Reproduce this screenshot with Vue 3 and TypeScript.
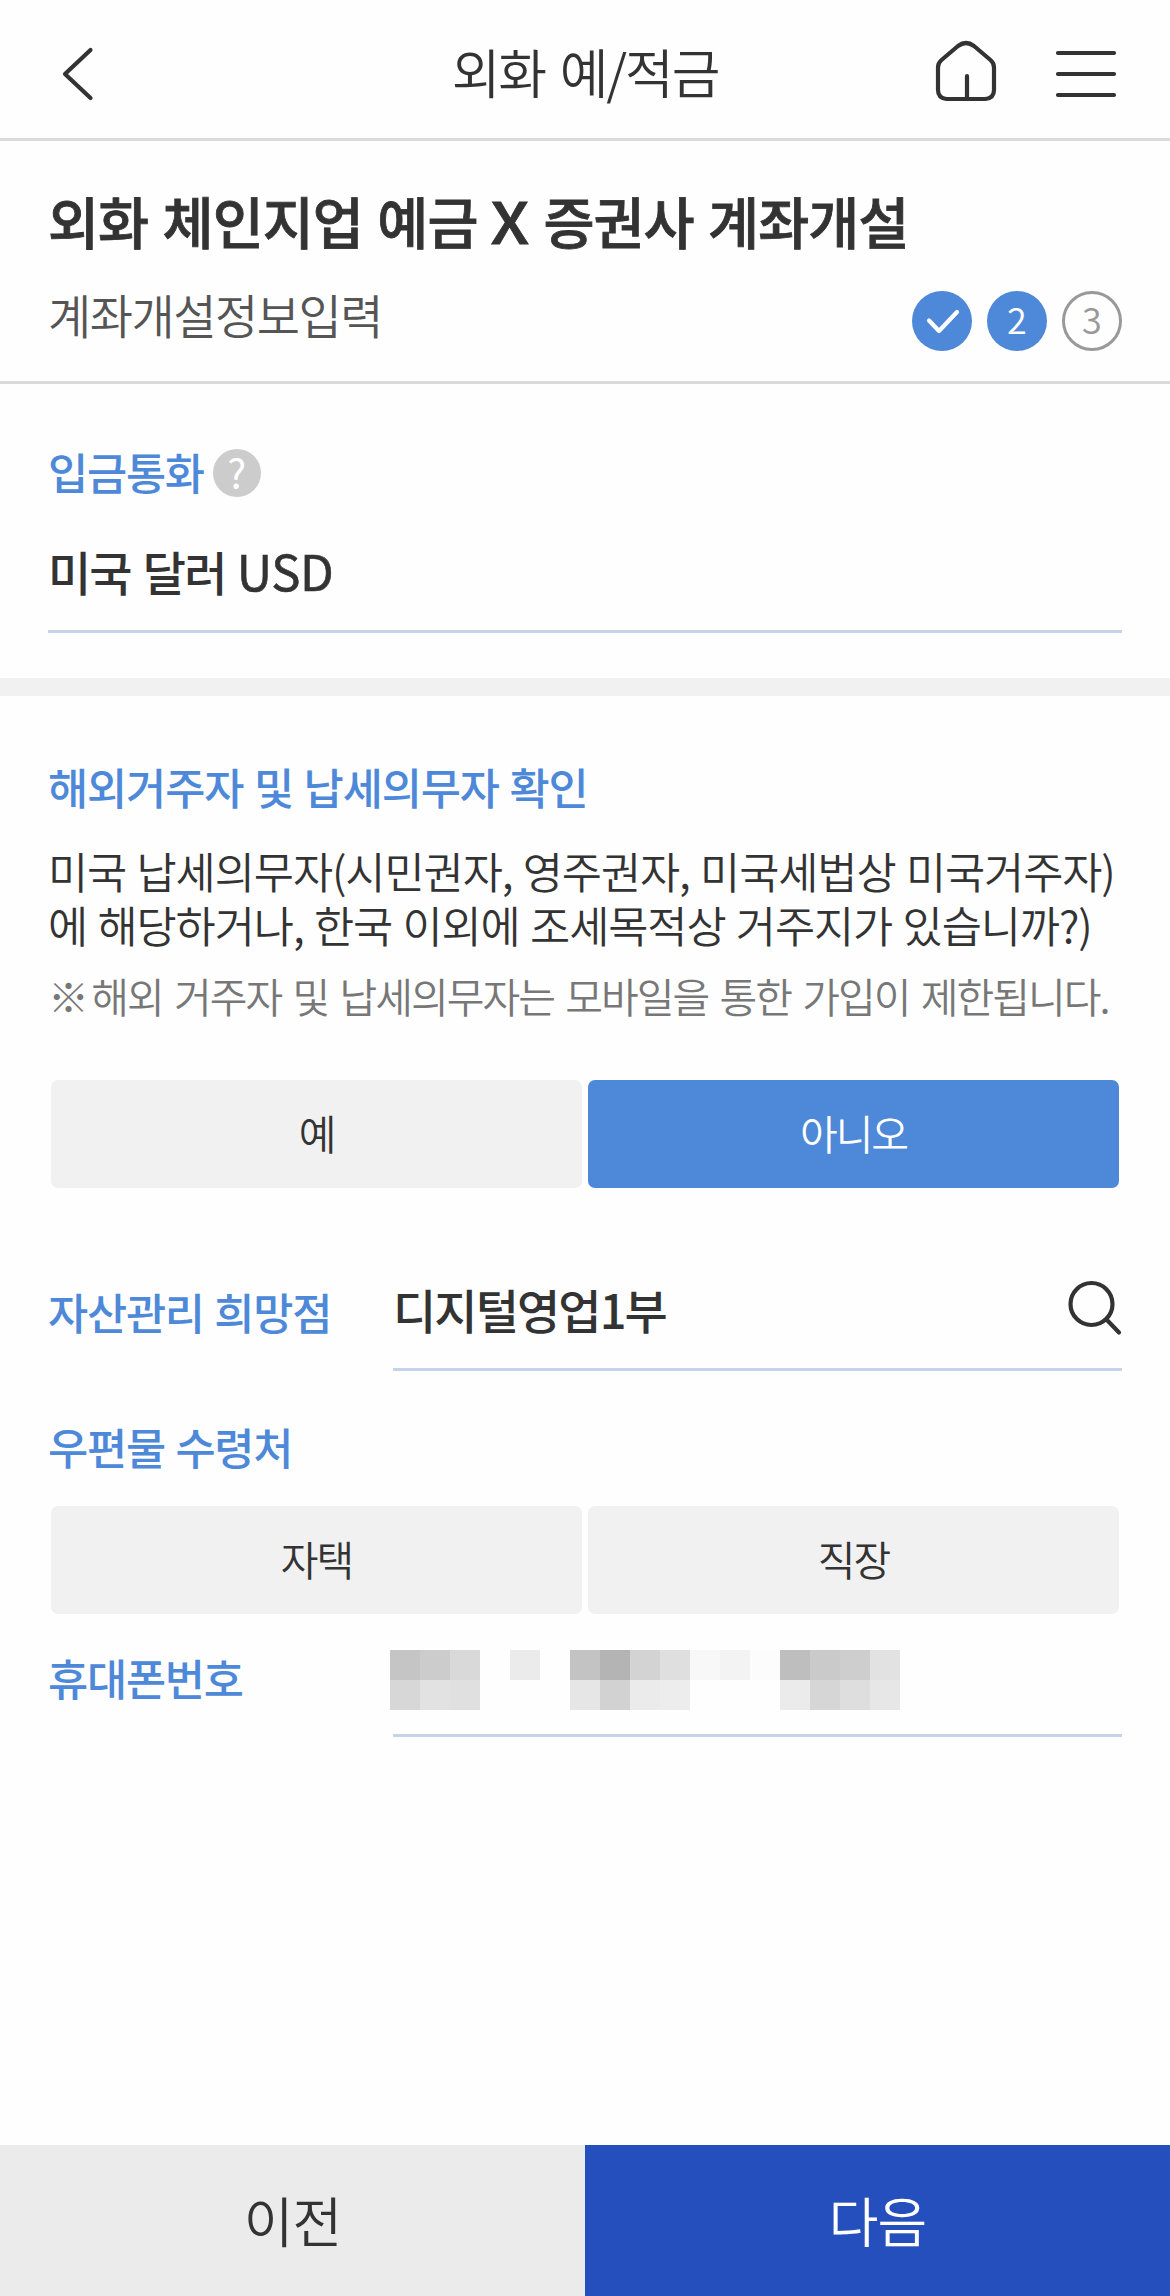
<script setup lang="ts">
import { ref } from 'vue'

const resident = ref('아니오')
const mail = ref('')

// Shades of the masked phone number, one row of cells per entry
const mask: string[][] = [
  ['#c5c5c5', '#cccccc', '#d9d9d9', '', '#ebebeb', '', '#c3c3c3', '#b4b4b4', '#d3d3d3', '#dfdfdf', '#f8f8f8', '#f3f3f3', '#fcfcfc', '#bebebe', '#cacaca', '#cecece', '#e2e2e2'],
  ['#d7d7d7', '#e2e2e2', '#e0e0e0', '', '', '', '#e6e6e6', '#d2d2d2', '#ebebeb', '#ededed', '', '', '', '#ebebeb', '#d6d6d6', '#dedede', '#e7e7e7'],
]
</script>

<template>
  <div class="screen">
    <header class="top">
      <svg class="back" viewBox="0 0 36 56" width="36" height="56"><path d="M30.500 4 5 28 30.500 52" /></svg>
      <h1>외화 예/적금</h1>
      <div class="tools">
        <svg viewBox="0 0 60 60" width="60" height="60"><path d="M10.500 58H49.500Q58 57 58 49V26.500Q58 22 54.500 19L38 5Q30 -1 22 5L5.500 19Q2 22 2 26.500V49Q2 57 10.500 58ZM31 35V58" /></svg>
        <svg viewBox="0 0 60 60" width="60" height="60"><path d="M2 12H58M2 33H58M2 54H58" /></svg>
      </div>
    </header>

    <section class="intro">
      <h2>외화 체인지업 예금 <span class="cross">X</span> 증권사 계좌개설</h2>
      <div class="intro-row">
        <p>계좌개설정보입력</p>
        <ol>
          <li class="on"><svg viewBox="0 0 60 60" width="60" height="60"><path d="M17 29.500 27 40 45 21" /></svg></li>
          <li class="on">2</li>
          <li>3</li>
        </ol>
      </div>
    </section>

    <section class="currency">
      <div class="label-row">
        <h3>입금통화</h3>
        <span class="help">?</span>
      </div>
      <div class="field usd">미국 달러 <span class="code">USD</span></div>
    </section>

    <main class="details">
      <h3 class="resident-label">해외거주자 및 납세의무자 확인</h3>
      <p class="question">
        미국 납세의무자(시민권자, 영주권자, 미국세법상 미국거주자)<br />에 해당하거나, 한국 이외에 조세목적상 거주지가 있습니까?)
      </p>
      <p class="note"><span class="mark">※ </span>해외 거주자 및 납세의무자는 모바일을 통한 가입이 제한됩니다.</p>
      <div class="choices">
        <button v-for="o in ['예', '아니오']" :key="o" :class="{ selected: resident === o }" @click="resident = o">{{ o }}</button>
      </div>

      <div class="form-row branch">
        <h3>자산관리 희망점</h3>
        <div class="field">
          <span>디지털영업1부</span>
          <svg viewBox="0 0 56 56" width="56" height="56"><circle cx="25.500" cy="26" r="21" /><path d="M40.500 41.500 53 54.500" /></svg>
        </div>
      </div>

      <h3 class="mail-label">우편물 수령처</h3>
      <div class="choices mail">
        <button v-for="o in ['자택', '직장']" :key="o" :class="{ selected: mail === o }" @click="mail = o">{{ o }}</button>
      </div>

      <div class="form-row phone">
        <h3>휴대폰번호</h3>
        <div class="field">
          <div class="mask">
            <template v-for="(row, r) in mask" :key="r">
              <i v-for="(shade, c) in row" :key="c" :style="{ background: shade || 'transparent' }"></i>
            </template>
          </div>
        </div>
      </div>
    </main>

    <footer>
      <button class="prev">이전</button>
      <button class="next">다음</button>
    </footer>
  </div>
</template>

<style>
body {
  margin: 0;
  background: #fefefe;
}
</style>

<style scoped>
* {
  box-sizing: border-box;
}
.screen {
  display: flex;
  flex-direction: column;
  width: 1170px;
  height: 2296px;
  overflow: hidden;
  background: #fefefe;
  color: #333;
  font-family: "Noto Sans CJK KR", sans-serif;
}
h1, h2, h3, p, ol {
  margin: 0;
  padding: 0;
  white-space: nowrap;
}
svg {
  display: block;
  flex: none;
  overflow: visible;
  fill: none;
  stroke: #333;
  stroke-width: 4.2;
  stroke-linecap: round;
  stroke-linejoin: round;
}
button {
  border: 0;
  padding: 0;
  font-family: inherit;
  color: #333;
}
.top {
  display: grid;
  grid-template-columns: 1fr auto 1fr;
  height: 141px;
  flex: none;
  padding: 4px 54px 0;
  border-bottom: 3px solid #dadada;
}
.back {
  margin: 42px 0 0 6px;
}
.top h1 {
  line-height: 134px;
  font-size: 53px;
  font-weight: 350;
  letter-spacing: -2.1px;
  word-spacing: 5px;
}
.tools {
  display: flex;
  justify-content: flex-end;
  gap: 60px;
  padding-top: 37px;
}
.intro {
  flex: none;
  height: 243px;
  padding: 39px 48px 0;
  border-bottom: 3px solid #dadada;
}
.intro h2 {
  line-height: 80px;
  font-size: 55.5px;
  font-weight: 500;
  letter-spacing: -1px;
  word-spacing: 3px;
  -webkit-text-stroke: 0.8px #333;
}
.cross {
  display: inline-block;
  padding: 0 3px 0 1px;
  font-size: 57px;
  line-height: 1;
  transform: scaleX(1.14);
}
.intro-row {
  display: flex;
  justify-content: space-between;
  margin-top: 31px;
}
.intro-row p {
  line-height: 45px;
  font-size: 47px;
  font-weight: 350;
  letter-spacing: -1.5px;
  color: #555;
}
ol {
  display: flex;
  gap: 15px;
  list-style: none;
}
li {
  width: 60px;
  height: 60px;
  border: 3px solid #999;
  border-radius: 50%;
  line-height: 49px;
  text-align: center;
  font-size: 36px;
  font-weight: 350;
  color: #999;
}
li.on {
  border: 0;
  line-height: 55px;
  background: #4e88d8;
  color: #fff;
}
li svg {
  stroke: #fff;
}
h3 {
  line-height: 44px;
  font-size: 43.700px;
  font-weight: 500;
  letter-spacing: -1.25px;
  word-spacing: 2px;
  color: #4e88d8;
}
.resident-label {
  letter-spacing: -1.15px;
}
.currency {
  flex: none;
  height: 312px;
  padding: 65px 48px 0;
  border-bottom: 18px solid #f1f1f1;
}
.label-row {
  display: flex;
  gap: 9px;
  height: 48px;
}
.help {
  width: 48px;
  height: 48px;
  border-radius: 50%;
  background: #ccc;
  color: #fff;
  text-align: center;
  line-height: 45px;
  font-size: 40px;
}
.field {
  border-bottom: 3px solid #c7d3ec;
  line-height: 60px;
  font-size: 47px;
  font-weight: 500;
  letter-spacing: -1.9px;
}
.usd {
  height: 92px;
  margin-top: 44px;
  word-spacing: 3.500px;
}
.code {
  margin-left: -1px;
  font-size: 49px;
  font-weight: 400;
  letter-spacing: -0.3px;
  line-height: 1;
  -webkit-text-stroke: 0.6px #333;
}
.details {
  flex: 1;
  padding: 68px 48px 0;
}
.question {
  margin-top: 35px;
  line-height: 54px;
  font-size: 43.700px;
  font-weight: 350;
  letter-spacing: -1.1px;
  word-spacing: 1.700px;
}
.note {
  margin-top: 19px;
  line-height: 50px;
  font-size: 41px;
  font-weight: 350;
  letter-spacing: -1.95px;
  word-spacing: 4px;
  color: #777;
}
.mark {
  word-spacing: -3px;
}
.choices {
  display: flex;
  gap: 6px;
  margin-top: 60px;
  padding: 0 3px;
}
.choices button {
  flex: 1;
  height: 108px;
  padding-bottom: 5px;
  border-radius: 7px;
  background: #f1f1f1;
  font-size: 41px;
  font-weight: 350;
  letter-spacing: -2px;
}
.choices button.selected {
  background: #4e88d8;
  color: #fff;
}
.choices.mail {
  margin-top: 38px;
}
.form-row {
  display: grid;
  grid-template-columns: 345px 1fr;
  height: 93px;
}
.form-row h3 {
  padding-top: 11px;
}
.form-row .field {
  display: flex;
  justify-content: space-between;
}
.branch .field span {
  padding-top: 1px;
}
.branch {
  margin-top: 90px;
}
.phone {
  margin-top: 30px;
}
.mail-label {
  margin-top: 53px;
}
.mask {
  display: grid;
  grid-template-columns: repeat(17, 30px);
  grid-auto-rows: 30px;
  margin: 6px 0 0 -3px;
}
footer {
  display: flex;
  flex: none;
  height: 151px;
}
footer button {
  flex: 1;
  padding-bottom: 2px;
  font-size: 54px;
  font-weight: 350;
  letter-spacing: -1px;
}
.prev {
  background: #ebebeb;
}
.next {
  background: #254fbd;
  color: #fff;
}
</style>
